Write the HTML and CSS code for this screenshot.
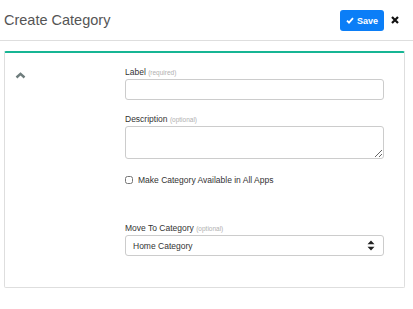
FILE: index.html
```html
<!DOCTYPE html>
<html lang="en">
<head>
  <meta charset="UTF-8" />
  <meta name="viewport" content="width=device-width, initial-scale=1.0"/>
  <title>Create Category</title>
  <link rel="stylesheet" href="styles.css">
</head>
<body>
  <div class="header">
    <h2>Create Category</h2>
    <button class="save" type="button">
      <svg width="8" height="7" viewBox="0 0 8 7"><path d="M1 3.6 L3 5.6 L7 1.2" fill="none" stroke="#fff" stroke-width="1.8"/></svg>
      Save
    </button>
    <span class="close">
      <svg width="8" height="8" viewBox="0 0 8 8"><path d="M1 1 L7 7 M7 1 L1 7" stroke="#111" stroke-width="2.2"/></svg>
    </span>
  </div>

  <div class="card">
    <div class="toggle">
      <svg width="11" height="7" viewBox="0 0 11 7"><path d="M1.5 5.5 L5.5 1.8 L9.5 5.5" fill="none" stroke="#6f7d7d" stroke-width="2.4"/></svg>
    </div>
    <form class="form">
      <div class="field">
        <label for="label">Label <span class="hint">(required)</span></label>
        <input type="text" id="label" />
      </div>

      <div class="field desc">
        <label for="desc">Description <span class="hint">(optional)</span></label>
        <textarea id="desc"></textarea>
      </div>

      <div class="check">
        <input type="checkbox" id="all" />
        <label for="all">Make Category Available in All Apps</label>
      </div>

      <div class="field move">
        <label for="move">Move To Category <span class="hint">(optional)</span></label>
        <div class="select">
          <span>Home Category</span>
          <svg width="8" height="11" viewBox="0 0 8 11"><path d="M4 0.5 L7.5 4.3 L0.5 4.3 Z M4 10.5 L7.5 6.7 L0.5 6.7 Z" fill="#222"/></svg>
        </div>
      </div>
    </form>
  </div>
</body>
</html>
```

FILE: styles.css
```css
body {
  margin: 0;
  font-family: "Liberation Sans", Arial, sans-serif;
  background: #fff;
  color: #333;
}
.header {
  height: 40px;
  display: flex;
  align-items: center;
  padding: 0 14px 0 4px;
  border-bottom: 1px solid #dedede;
}
.header h2 {
  flex: 1;
  margin: 0;
  font-size: 14.5px;
  font-weight: normal;
  color: #555;
}
.save {
  display: flex;
  align-items: center;
  gap: 3px;
  height: 21px;
  width: 44px;
  justify-content: center;
  background: #0b7ef7;
  color: #fff;
  border: none;
  border-radius: 3px;
  font-family: inherit;
  font-size: 9px;
  font-weight: bold;
  padding: 0;
  margin-top: 1px;
}
.close {
  display: flex;
  margin-left: 7px;
}
.card {
  display: flex;
  margin: 10px 8px 0 4px;
  height: 237px;
  box-sizing: border-box;
  border: 1px solid #dedede;
  border-top: 2px solid #17b594;
  border-radius: 2px;
}
.toggle {
  width: 120px;
  padding: 12px 0 0 10px;
  box-sizing: border-box;
}
.form {
  width: 259px;
  padding-top: 14px;
}
.field label {
  display: block;
  height: 11px;
  font-size: 8.5px;
  line-height: 11px;
  margin-bottom: 1px;
  color: #333;
  white-space: nowrap;
}
.hint {
  font-size: 6.5px;
  color: #b0b0b0;
}
.field input, .field textarea, .select {
  display: block;
  width: 100%;
  box-sizing: border-box;
  border: 1px solid #ccc;
  border-radius: 3px;
  margin: 0;
}
.field input {
  height: 21px;
}
.desc {
  margin-top: 14px;
}
.field textarea {
  height: 33px;
  resize: vertical;
}
.check {
  display: flex;
  align-items: center;
  margin-top: 16px;
  height: 10px;
}
.check input {
  width: 8px;
  height: 8px;
  margin: 0 5px 0 0;
}
.check label {
  font-size: 8.5px;
  color: #333;
}
.move {
  margin-top: 38px;
}
.select {
  height: 21px;
  display: flex;
  align-items: center;
  justify-content: space-between;
  padding: 0 8px 0 7px;
  font-size: 8.5px;
  color: #333;
}
```
